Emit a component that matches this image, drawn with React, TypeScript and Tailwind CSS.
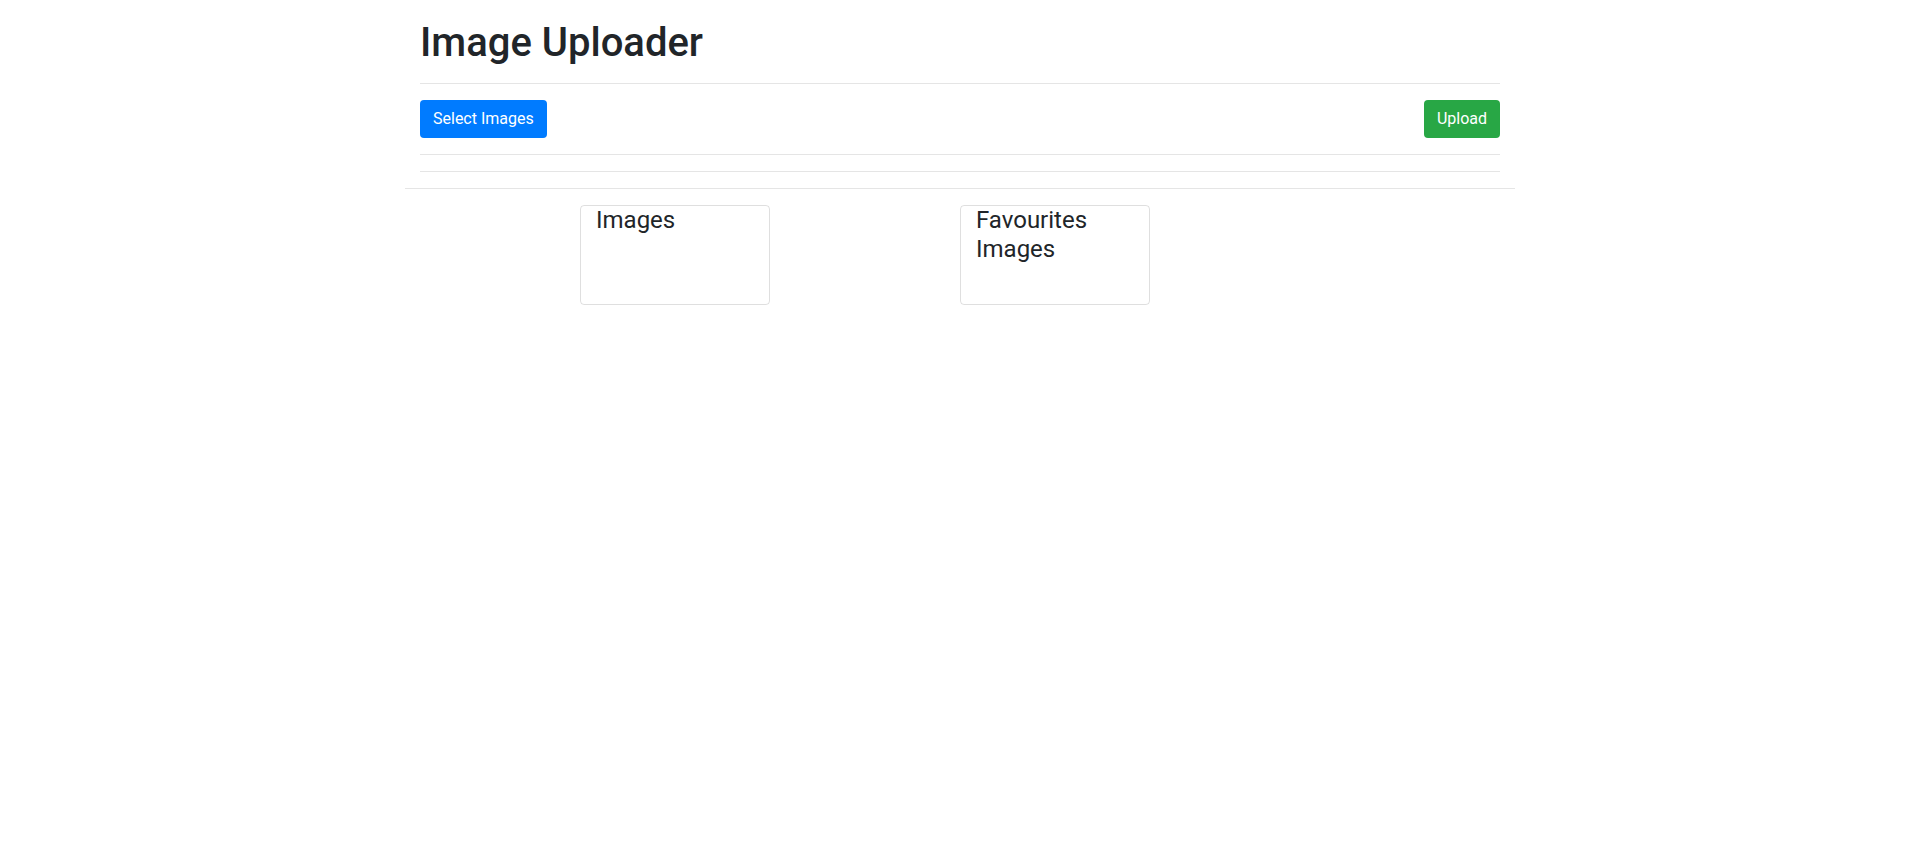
import React from 'react';

function ImageCard({ title }: { title: string }) {
  return (
    <div className="w-[190px] h-[100px] border border-black/[0.125] rounded px-[15px]">
      <h4 className="text-[24px] leading-[1.2] font-normal">{title}</h4>
    </div>
  );
}

export default function App() {
  return (
    <div className="min-h-screen bg-white font-['Roboto',sans-serif] text-[#212529]">
      <div className="mx-auto w-[1140px] px-[15px]">
        <div className="px-[15px] pt-[19px]">
          <h1 className="text-[40px] leading-[1.2] font-medium">Image Uploader</h1>
          <hr className="my-4 border-black/10" />
          <div className="flex items-center justify-between">
            <button className="h-[38px] px-[13px] rounded bg-[#007bff] text-white text-base leading-6">
              Select Images
            </button>
            <button className="h-[38px] px-[13px] rounded bg-[#28a745] text-white text-base leading-6">
              Upload
            </button>
          </div>
          <hr className="my-4 border-black/10" />
          <hr className="my-4 border-black/10" />
        </div>
        <hr className="my-4 border-black/10" />
        {/* image lists */}
        <div className="flex gap-[190px] pl-[175px]">
          <ImageCard title="Images" />
          <ImageCard title="Favourites Images" />
        </div>
      </div>
    </div>
  );
}
